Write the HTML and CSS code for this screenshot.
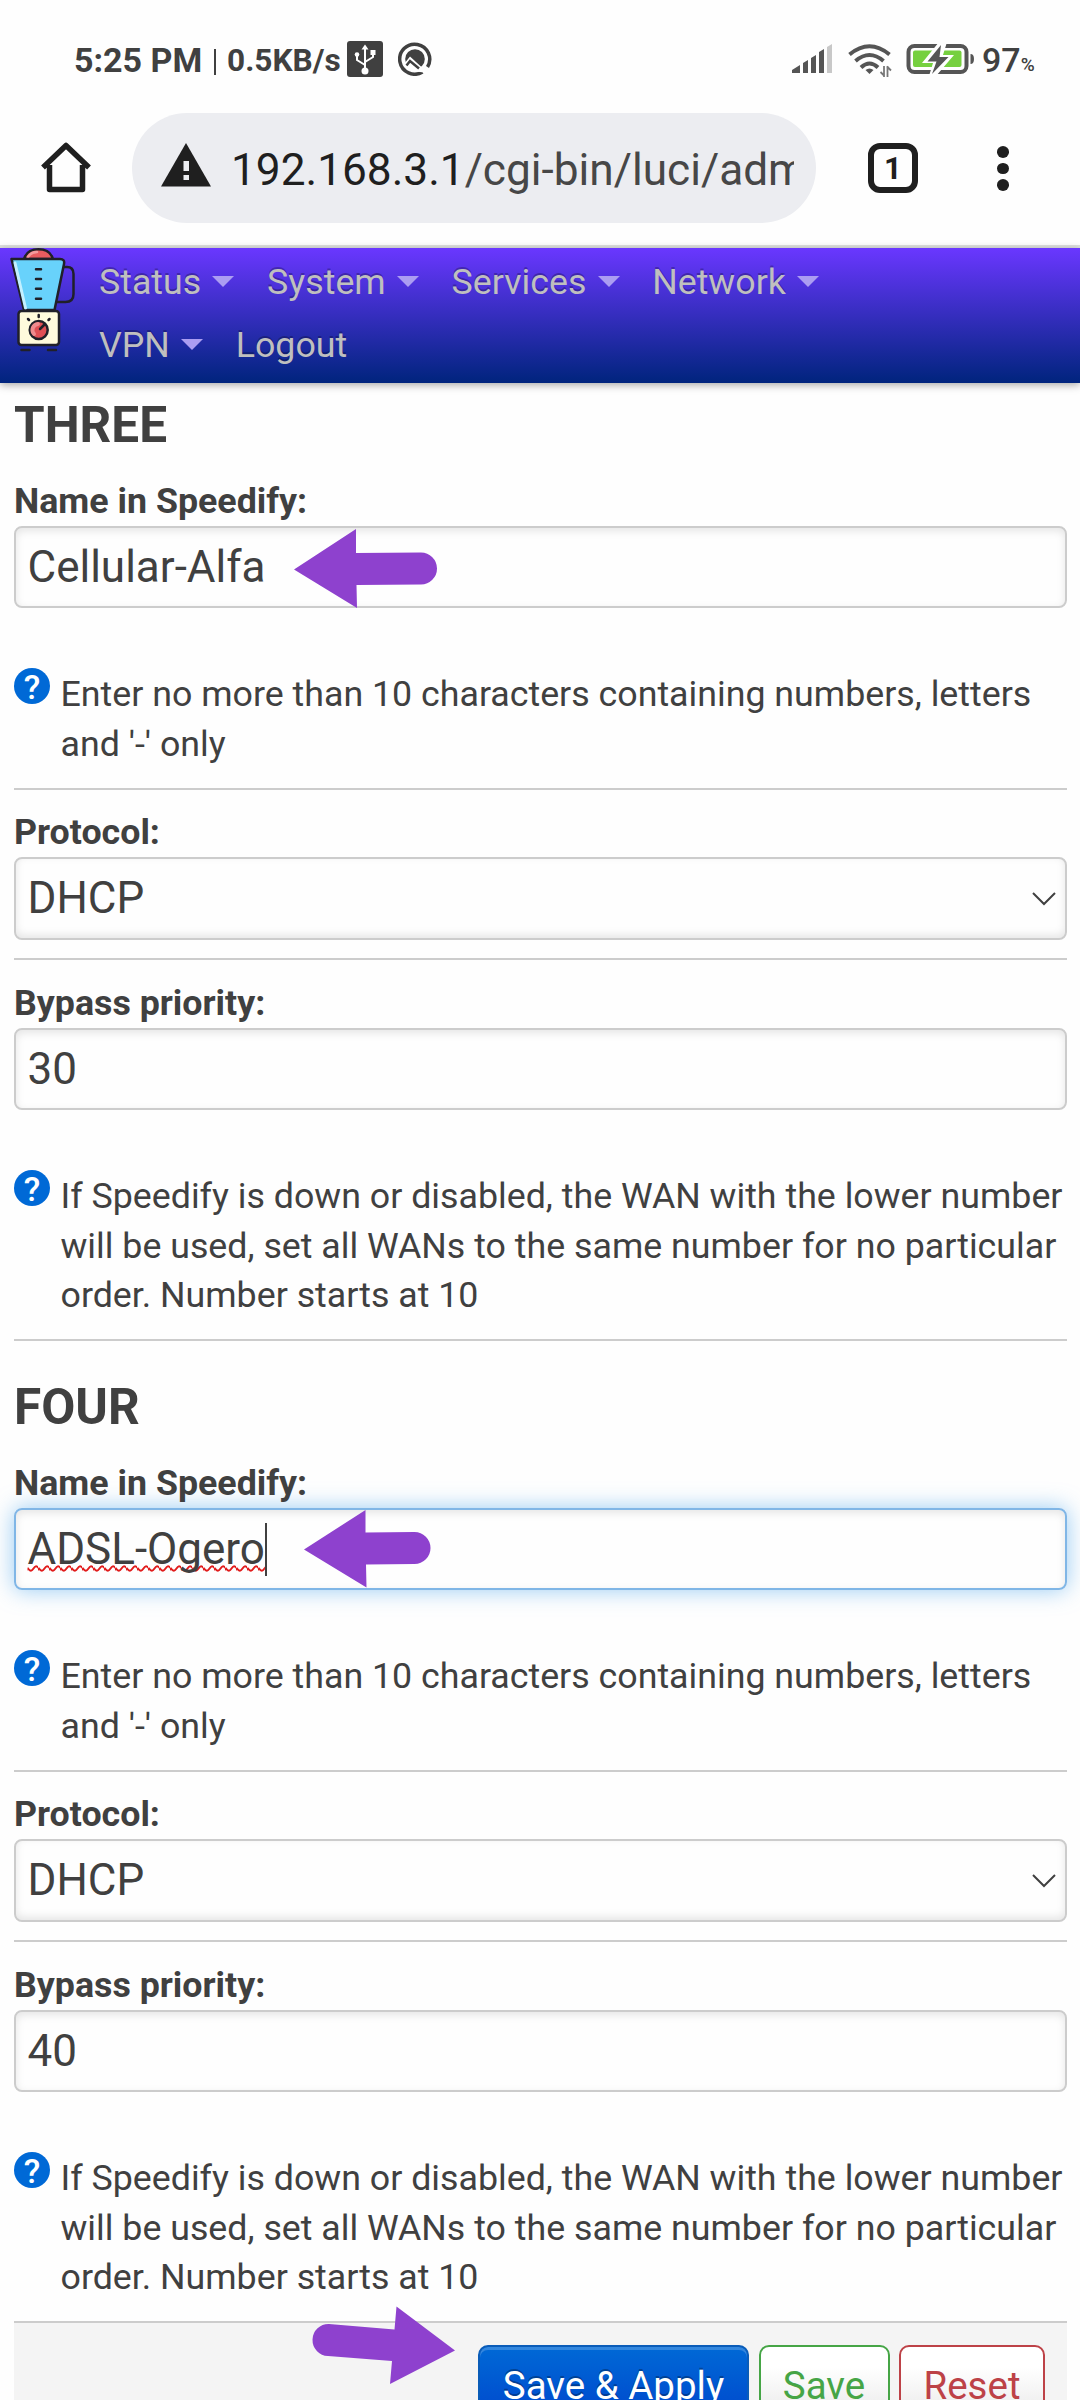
FILE: index.html
```html
<!DOCTYPE html>
<html lang="en">
<head>
<meta charset="utf-8">
<title>Speedify</title>
<link rel="stylesheet" href="styles.css">
</head>
<body>
<div class="screen">
  <div class="statusbar">
    <span class="clock">5:25 PM</span><span class="sep"></span><span class="speed">0.5KB/s</span>
    <svg class="usb" width="36" height="36" viewBox="0 0 36 36"><rect width="36" height="36" rx="3" fill="#404040"/><path d="M18 5v25M18 24l-8-5v-5M18 21l8-5v-5" fill="none" stroke="#fff" stroke-width="2"/><path d="M14.500 8.500L18 3.500l3.500 5z" fill="#fff"/><circle cx="10" cy="13.500" r="2.300" fill="#fff"/><path d="M23.500 9h5v5h-5z" fill="#fff"/><circle cx="18" cy="30" r="3.500" fill="#fff"/></svg>
    <svg class="ring" width="34" height="34" viewBox="0 0 34 34"><path d="M24.500 30A15 15 0 1 1 29.500 25" fill="none" stroke="#404040" stroke-width="3.500"/><circle cx="17" cy="17" r="9.800" fill="#404040"/><path d="M6 22l6-7.500L30 31l-8-1-9-1z" fill="#fff"/><path d="M8.500 23.500l3.500-4.500 9 7.500" fill="none" stroke="#404040" stroke-width="2.500"/></svg>
    <svg class="signal" width="41" height="30" viewBox="0 0 41 30"><path d="M0 29v-3l8-5v8zM11 29V19l5-3v13zM19 29V14l5-3v18zM27 29V8l5-3v24z" fill="#555"/><path d="M35 29V3l5-3v29z" fill="#c8c8c8"/></svg>
    <svg class="wifi" width="44" height="34" viewBox="0 0 44 34"><g fill="none" stroke="#555" stroke-width="4"><path d="M1.500 10.500Q21.500 -6 41.500 10.500"/><path d="M7.500 17q14-12 28 0"/><path d="M13 23.500q8.500-8 17 0"/></g><path d="M17.500 26q4-3 8 0l-4 4z" fill="#555"/><path d="M36 22v11M36.500 32l-4-4M39.500 33V22M39 22.500l4 4" fill="none" stroke="#777" stroke-width="1.800"/></svg>
    <svg class="battery" width="70" height="32" viewBox="0 0 70 32"><rect x="2.500" y="2" width="58" height="26" rx="6" fill="none" stroke="#555" stroke-width="4"/><rect x="7" y="6.500" width="48.500" height="16.500" rx="2" fill="#76d03f"/><path d="M64.500 10q3.500 0 3.500 5t-3.500 5z" fill="#555"/><path d="M33-2L16 19h11l-4 13h7L48 11H37l4-13z" fill="#fff"/><path d="M35 1L21.500 17.500h9L26 30l16.500-17h-9z" fill="#555"/></svg>
    <span class="level">97</span><span class="pct">%</span>
  </div>
  <div class="toolbar">
    <svg class="home" width="50" height="52" viewBox="0 0 50 52"><path d="M8.500 23v24.500h33V23M2 25.500L25 3.500l23 22" fill="none" stroke="#1f1f1f" stroke-width="5.500" stroke-linejoin="round"/></svg>
    <div class="omnibox">
      <svg width="50" height="44" viewBox="0 0 50 44"><path d="M25 0l25 43.500H0z" fill="#1f1f1f"/><path d="M22.500 18h5.500v10h-5.500zM22.500 32h5.500v5h-5.500z" fill="#ecedf1"/></svg>
      <div class="url">192.168.3.1<span>/cgi-bin/luci/admin</span></div>
    </div>
    <div class="tabs">1</div>
    <div class="menu"><i></i><i></i><i></i></div>
  </div>
  <header class="nav">
    <svg class="logo" width="68" height="112" viewBox="0 0 68 112"><g stroke="#202028" stroke-width="2.500" stroke-linejoin="round" stroke-linecap="round"><path d="M14 11Q17 1.300 28.500 1.300T43 11z" fill="#e85c60"/><path d="M18 9q3-5 9-5" stroke="#f39a9c" fill="none"/><path d="M54 19h3q6.500 0 6.500 7v20q0 8-8 8h-8" fill="none"/><path d="M1.500 11H50q5 0 4 5l-9.500 46H14z" fill="#68d2fb"/><path d="M5 15l10.500 45" stroke="#c3f0ff" stroke-width="3" fill="none"/><rect x="8.500" y="63" width="40.500" height="34" rx="3" fill="#fffbdc"/><circle cx="28.700" cy="82" r="9" fill="#e05055"/><path d="M24 86a6 6 0 0 1 4-10" stroke="#f08c8e" stroke-width="4" fill="none"/><path d="M30 81l4-4M26 21.300h5M26 31h5M26 40.700h5M26 50.700h5M28.700 67v2M18 71l1 1M39.500 71l-1 1M11.500 102h8M38 102h8"/></g></svg>
    <nav class="links">
      <a>Status<b></b></a><a>System<b></b></a><a>Services<b></b></a><a>Network<b></b></a><a>VPN<b></b></a><a>Logout</a>
    </nav>
  </header>
  <main class="content">
    <section class="wan">
      <h3>THREE</h3>
      <div class="field"><label>Name in Speedify:</label>
        <div class="input"><span>Cellular-Alfa</span></div>
        <div class="hint"><i>?</i><p>Enter no more than 10 characters containing numbers, letters and '-' only</p></div></div>
      <div class="field"><label>Protocol:</label>
        <div class="input select"><span>DHCP</span><svg width="24" height="14" viewBox="0 0 24 14"><path d="M1 1l11 11L23 1" fill="none" stroke="#404040" stroke-width="2"/></svg></div></div>
      <div class="field"><label>Bypass priority:</label>
        <div class="input"><span>30</span></div>
        <div class="hint"><i>?</i><p>If Speedify is down or disabled, the WAN with the lower number will be used, set all WANs to the same number for no particular order. Number starts at 10</p></div></div>
    </section>
    <section class="wan">
      <h3>FOUR</h3>
      <div class="field"><label>Name in Speedify:</label>
        <div class="input focus"><span class="typo">ADSL-Ogero</span></div>
        <div class="hint"><i>?</i><p>Enter no more than 10 characters containing numbers, letters and '-' only</p></div></div>
      <div class="field"><label>Protocol:</label>
        <div class="input select"><span>DHCP</span><svg width="24" height="14" viewBox="0 0 24 14"><path d="M1 1l11 11L23 1" fill="none" stroke="#404040" stroke-width="2"/></svg></div></div>
      <div class="field"><label>Bypass priority:</label>
        <div class="input"><span>40</span></div>
        <div class="hint"><i>?</i><p>If Speedify is down or disabled, the WAN with the lower number will be used, set all WANs to the same number for no particular order. Number starts at 10</p></div></div>
    </section>
    <div class="actions"><div class="btn apply">Save &amp; Apply</div><div class="btn save">Save</div><div class="btn reset">Reset</div></div>
  </main>
  <svg class="arrows" width="1080" height="2400" viewBox="0 0 1080 2400" fill="#8e41ce"><path d="M294 569.500L356 529v24l65-.5a16 16 0 0 1 0 32l-64.500.5 .5 23z"/><path d="M304 1549.500L365.500 1510v22.500l49-.5a16 16 0 0 1 0 32l-48.500.5 .5 23z"/><path d="M455 2350.500L396.500 2306.500l-2 23L329 2324a16 16 0 0 0-1 32l64 5-2 23z"/></svg>
</div>
</body>
</html>
```
FILE: styles.css
```css
* { box-sizing: border-box; }
body { margin: 0; font-family: Roboto, "Liberation Sans", sans-serif; color: #404040; background: #fefefe; }
.screen { position: relative; width: 1080px; height: 2400px; overflow: hidden; }
svg { flex: none; display: block; }
.statusbar { display: flex; height: 113px; padding: 41px 0 0 74px; align-items: flex-start; white-space: nowrap; }
.clock { width: 140px; font-size: 34px; font-weight: 700; line-height: 38px; }
.sep { width: 2px; height: 26px; margin-top: 8px; background: #404040; }
.speed { width: 119px; padding-left: 11px; margin-right: 12px; font-size: 31.600px; font-weight: 700; line-height: 39px; }
.ring { margin: 1px 0 0 15px; }
.signal { margin: 3px 0 0 360px; }
.wifi { margin: 3px 0 0 15px; }
.battery { margin: 3px 0 0 14px; }
.level { margin-left: 6px; font-size: 34px; font-weight: 500; line-height: 38px; }
.pct { font-size: 19px; font-weight: 500; line-height: 47px; margin-left: 0; }
.toolbar { display: flex; height: 135px; padding-left: 41px; border-bottom: 3px solid #dfe1e0; }
.home { margin-top: 29px; }
.omnibox { display: flex; width: 684px; height: 110px; margin-left: 41px; padding-left: 29px; border-radius: 55px; background: #ecedf1; }
.omnibox svg { margin-top: 30px; }
.url { width: 563px; margin-left: 20px; overflow: hidden; white-space: nowrap; font-size: 44.200px; line-height: 114px; color: #1f1f1f; }
.url span { color: #474747; }
.tabs { width: 50px; height: 50px; margin: 30px 0 0 52px; border: 6px solid #1f1f1f; border-radius: 12px; font-size: 31px; font-weight: 700; line-height: 39px; text-align: center; color: #1f1f1f; }
.menu { display: flex; flex-direction: column; gap: 5px; margin: 33px 0 0 79px; }
.menu i { width: 12px; height: 11.500px; border-radius: 50%; background: #1f1f1f; }
.nav { position: relative; display: flex; height: 135px; padding-left: 10px; background: linear-gradient(#6a37ff, #00247d); box-shadow: 0 2px 8px rgba(0,0,0,.35); }
.links { display: flex; flex-wrap: wrap; width: 850px; padding: 2px 0 0 21px; align-content: flex-start; column-gap: 32.700px; }
.links a { display: flex; align-items: center; height: 63px; font-size: 35.750px; color: #bfbfbf; text-shadow: 0 -2px 0 rgba(0,0,0,.25); }
.links b { margin-left: 11.200px; border: 11px solid transparent; border-top-color: #ab9df2; border-bottom: 0; }
.content { padding: 0 13px 0 14px; }
.wan { height: 982px; }
.wan + .wan { height: 958px; }
h3 { margin: 0; height: 97px; padding-top: 12px; font-size: 49.500px; line-height: 60px; }
.field { border-bottom: 2px solid #ccc; }
.field:nth-child(2) { height: 310px; }
.field:nth-child(3) { height: 170px; }
.field:nth-child(4) { height: 381px; }
label { display: block; height: 46px; font-size: 35.750px; font-weight: 700; line-height: 42px; }
.field:nth-child(3) label { height: 67px; line-height: 84px; }
.field:nth-child(4) label { height: 68px; line-height: 87px; }
.input { display: flex; height: 82px; padding-left: 11.500px; border: 2px solid #ccc; border-radius: 8px; font-size: 44px; line-height: 78px; box-shadow: inset 0 3px 8px rgba(0,0,0,.1); }
.select { justify-content: space-between; align-items: center; padding-right: 9px; height: 83px; box-shadow: inset 0 -3px 8px rgba(0,0,0,.1); }
.select span { margin-top: -2px; }
.focus { border-color: #80b6e6; box-shadow: inset 0 3px 8px rgba(0,0,0,.1), 0 0 22px rgba(82,168,236,.6); }
.typo { height: 53px; margin-top: 13px; line-height: 52px; border-right: 2px solid #404040; text-decoration: underline wavy #e11b1b 2px; text-decoration-skip-ink: none; }
.hint { display: flex; padding-top: 60px; }
.hint i { flex: none; width: 36px; height: 36px; border-radius: 50%; background: #0069d6; color: #fff; font: 500 34px/38px Roboto, sans-serif; text-align: center; }
.hint p { margin: 2px 0 0 10.500px; font-size: 35.750px; line-height: 49.500px; width: 1010px; }
.actions { display: flex; height: 120px; padding: 22px 0 0 464px; background: #f4f4f4; gap: 9.500px; }
.btn { flex: none; height: 84px; border: 2px solid; border-radius: 10px; font-size: 38.500px; line-height: 77px; text-align: center; background: linear-gradient(#fff 25%, #e6e6e6); }
.apply { width: 271px; color: #fff; border-color: #0a5cb8; background: linear-gradient(#0069d6, #0044cc); box-shadow: inset 0 3px 0 rgba(255,255,255,.2); text-shadow: 0 -2px 0 rgba(0,0,0,.3); }
.save { width: 131px; color: #46a546; }
.reset { width: 146px; color: #bd4247; }
.arrows { position: absolute; left: 0; top: 0; }
```
